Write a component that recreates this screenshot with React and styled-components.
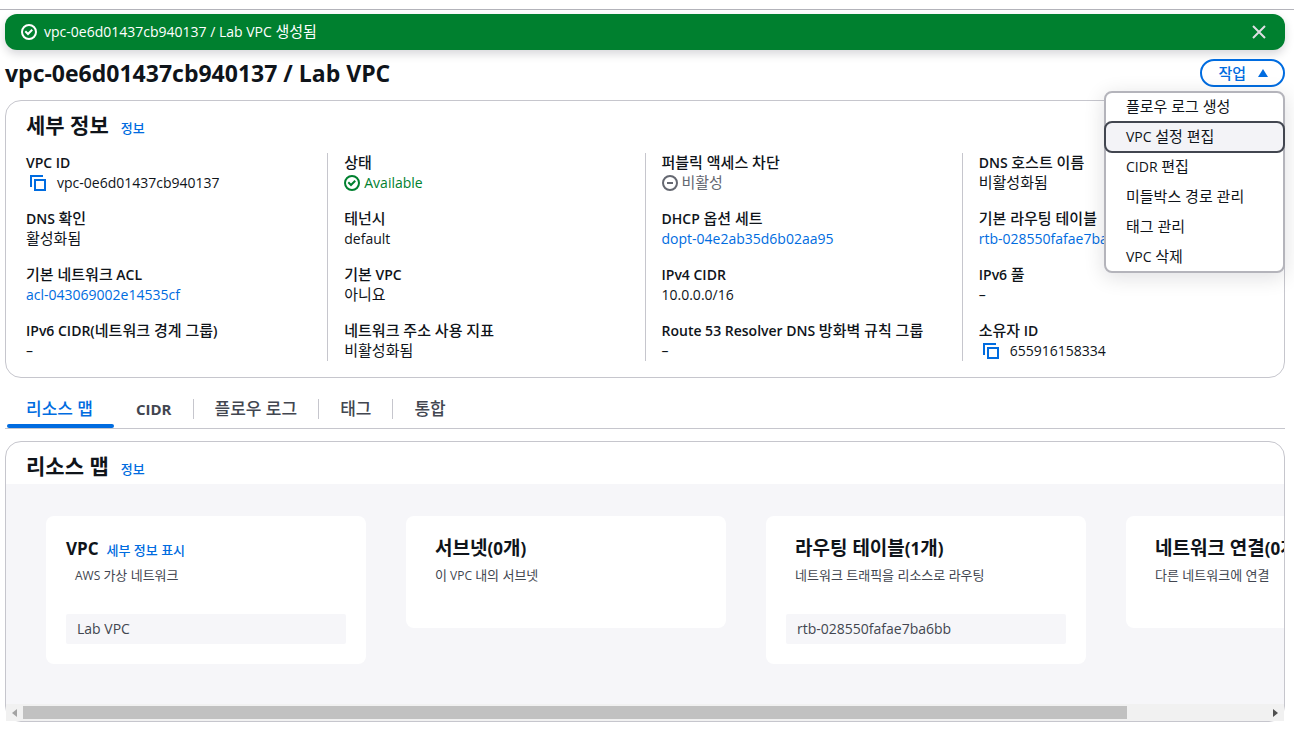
import React, { useState } from 'react'
import styled, { createGlobalStyle, css } from 'styled-components'

const GlobalStyle = createGlobalStyle`
* {
  box-sizing: border-box;
  margin: 0;
  padding: 0;
}
body {
  background: #ffffff;
  color: #0f141a;
  font-family: 'Open Sans', 'Noto Sans CJK KR', sans-serif;
  font-size: 14px;
  line-height: 20px;
}
ul {
  list-style: none;
}
button {
  font-family: inherit;
  background: none;
  border: none;
  cursor: pointer;
}
`

const Page = styled.div`
  margin-top: 9px;
  padding: 4px 9px 14px 5px;
  border-top: 1px solid #b4b4bb;
`
const Hangul = styled.span`
  font-size: ${props => props.$size}px;
  line-height: 1;
`
const Flash = styled.div`
  display: flex;
  align-items: center;
  height: 36px;
  padding: 0 18px 0 16px;
  gap: 7px;
  border-radius: 12px;
  background: #00802f;
  color: #ffffff;
  box-shadow: 0 4px 10px rgba(0, 7, 22, 0.16);
`
const FlashText = styled.p`
  flex: 1;
`
const Close = styled.button`
  display: flex;
  color: #dedee3;
`
const Header = styled.header`
  display: flex;
  justify-content: space-between;
  align-items: center;
  height: 50px;
  padding-bottom: 4px;
`
const Title = styled.h1`
  font-size: 23px;
  font-weight: 700;
  line-height: 28px;
`
const Actions = styled.div`
  position: relative;
`
const ActionButton = styled.button`
  display: flex;
  align-items: center;
  gap: 11px;
  height: 28px;
  padding: 0 14px 0 16px;
  border: 2px solid #006ce0;
  border-radius: 20px;
  color: #006ce0;
  font-size: 14px;
  font-weight: 600;
  ${Hangul} {
    font-weight: 500;
  }
`
const Menu = styled.ul`
  position: absolute;
  z-index: 2;
  top: 32px;
  right: 0;
  width: 181px;
  border: 2px solid #b4b4bb;
  border-radius: 8px;
  background: #ffffff;
  box-shadow: 0 4px 20px 1px rgba(0, 7, 22, 0.12);
`
const MenuItem = styled.li`
  margin: -2px -2px 0;
  &:last-child {
    margin-bottom: -2px;
  }
`
const MenuButton = styled.button`
  position: relative;
  display: block;
  width: 100%;
  height: 32px;
  padding: 0 20px;
  border: 2px solid transparent;
  border-radius: 8px;
  color: #0f141a;
  font-size: 14px;
  line-height: 20px;
  text-align: left;
  ${props => props.$active && css`
    z-index: 1;
    border-color: #424650;
    background: #f3f3f7;
  `}
`
const Panel = styled.section`
  border: 1px solid #c6c6cd;
  border-radius: 16px;
`
const PanelHeader = styled.div`
  display: flex;
  align-items: baseline;
  gap: 12px;
  padding: 13px 20px 4px;
`
const PanelTitle = styled.h2`
  font-size: 20px;
  font-weight: 700;
  line-height: 24px;
`
const InfoLink = styled.a`
  color: #006ce0;
  font-size: 12px;
  font-weight: 600;
  text-decoration: none;
  ${Hangul} {
    font-weight: 500;
  }
`
const Columns = styled.div`
  display: grid;
  grid-template-columns: repeat(4, 1fr);
  padding: 10px 5px 16px 4px;
`
const Column = styled.dl`
  display: flex;
  flex-direction: column;
  gap: 16px;
  min-width: 0;
  padding: 0 16px;
  white-space: nowrap;
  & + & {
    border-left: 1px solid #c6c6cd;
  }
`
const Label = styled.dt`
  height: 20px;
  font-weight: 600;
  ${Hangul} {
    font-weight: 500;
  }
`
const Value = styled.dd`
  display: flex;
  align-items: center;
  height: 20px;
`
const Link = styled.a`
  color: #006ce0;
  text-decoration: none;
`
const Status = styled.span`
  display: flex;
  align-items: center;
  gap: 4px;
  color: ${props => props.$color};
`
const CopyButton = styled.button`
  display: flex;
  margin: 0 11px 0 4px;
  color: #006ce0;
`
const Tabs = styled.div`
  display: flex;
  height: 41px;
  margin: 10px 0 12px;
  border-bottom: 1px solid #c6c6cd;
`
const Tab = styled.button`
  position: relative;
  display: flex;
  align-items: center;
  height: 41px;
  padding: 0 21px;
  color: ${props => (props.$active ? '#006ce0' : '#424650')};
  font-size: 15px;
  font-weight: 700;
  ${Hangul} {
    font-weight: 500;
  }
  & + & {
    padding-left: 22px;
  }
  & + &::before {
    content: '';
    position: absolute;
    left: 0;
    top: 11px;
    width: 1px;
    height: 20px;
    background: #c6c6cd;
  }
  ${props => props.$active && css`
    &::after {
      content: '';
      position: absolute;
      left: 2px;
      right: 0;
      bottom: 1px;
      height: 4px;
      border-radius: 2px;
      background: #006ce0;
    }
  `}
`
const Map = styled.div`
  display: flex;
  align-items: flex-start;
  gap: 40px;
  height: 220px;
  padding: 32px 0 0 40px;
  overflow: hidden;
  background: #f6f6f9;
`
const Card = styled.article`
  flex: 0 0 320px;
  min-height: 112px;
  padding: 20px;
  border-radius: 8px;
  background: #ffffff;
  white-space: nowrap;
`
const CardHeader = styled.div`
  display: flex;
  align-items: baseline;
  gap: 8px;
  padding-left: ${props => (props.$indent ? 9 : 0)}px;
`
const CardTitle = styled.h3`
  font-size: 17px;
  font-weight: 700;
  line-height: 26px;
`
const CardText = styled.p`
  padding-left: 9px;
  color: #424650;
  font-size: 12px;
  line-height: 28px;
`
const Resource = styled.div`
  height: 30px;
  margin-top: 24px;
  padding: 0 11px;
  border-radius: 2px;
  background: #f6f6f9;
  color: #424650;
  line-height: 30px;
`
const Scrollbar = styled.div`
  display: flex;
  align-items: center;
  height: 17px;
  background: #f1f1f1;
`
const Arrow = styled.button`
  display: flex;
  justify-content: center;
  flex: 0 0 17px;
  color: ${props => (props.$muted ? '#a3a3a3' : '#505050')};
`
const Track = styled.div`
  flex: 1;
`
const Thumb = styled.div`
  height: 13px;
  background: #c1c1c1;
`

// splits a mixed string and wraps only its hangul parts
const mix = (text, size = 15) =>
  text
    .split(/([\uAC00-\uD7A3]+(?: [\uAC00-\uD7A3]+)*)/)
    .filter(Boolean)
    .map((part, i) =>
      /[\uAC00-\uD7A3]/.test(part) ? <Hangul key={i} $size={size}>{part}</Hangul> : part
    )

const CheckIcon = () => (
  <svg width="16" height="16" viewBox="0 0 16 16" fill="none" stroke="currentColor" strokeWidth="2">
    <circle cx="8" cy="8" r="7" />
    <path d="m5 8 2 2 3.521-3.521" strokeLinecap="square" />
  </svg>
)

const MinusIcon = () => (
  <svg width="16" height="16" viewBox="0 0 16 16" fill="none" stroke="currentColor" strokeWidth="2">
    <circle cx="8" cy="8" r="7" />
    <path d="M11 8H5" />
  </svg>
)

const CopyIcon = () => (
  <svg width="16" height="16" viewBox="0 0 16 16" fill="none" stroke="currentColor" strokeWidth="2">
    <path d="M15 5H5v10h10V5Z" />
    <path d="M13 1H1v11" />
  </svg>
)

const CloseIcon = () => (
  <svg width="16" height="16" viewBox="0 0 16 16" fill="none" stroke="currentColor" strokeWidth="2">
    <path d="m2 2 12 12M14 2 2 14" />
  </svg>
)

const menu = ['플로우 로그 생성', 'VPC 설정 편집', 'CIDR 편집', '미들박스 경로 관리', '태그 관리', 'VPC 삭제']

const tabs = ['리소스 맵', 'CIDR', '플로우 로그', '태그', '통합']

const columns = [
  [
    { label: 'VPC ID', value: 'vpc-0e6d01437cb940137', type: 'copy' },
    { label: 'DNS 확인', value: '활성화됨' },
    { label: '기본 네트워크 ACL', value: 'acl-043069002e14535cf', type: 'link' },
    { label: 'IPv6 CIDR(네트워크 경계 그룹)', value: '–' }
  ],
  [
    { label: '상태', value: 'Available', type: 'ok' },
    { label: '테넌시', value: 'default' },
    { label: '기본 VPC', value: '아니요' },
    { label: '네트워크 주소 사용 지표', value: '비활성화됨' }
  ],
  [
    { label: '퍼블릭 액세스 차단', value: '비활성', type: 'off' },
    { label: 'DHCP 옵션 세트', value: 'dopt-04e2ab35d6b02aa95', type: 'link' },
    { label: 'IPv4 CIDR', value: '10.0.0.0/16' },
    { label: 'Route 53 Resolver DNS 방화벽 규칙 그룹', value: '–' }
  ],
  [
    { label: 'DNS 호스트 이름', value: '비활성화됨' },
    { label: '기본 라우팅 테이블', value: 'rtb-028550fafae7ba6bb', type: 'link' },
    { label: 'IPv6 풀', value: '–' },
    { label: '소유자 ID', value: '655916158334', type: 'copy' }
  ]
]

const cards = [
  { title: 'VPC', link: '세부 정보 표시', text: 'AWS 가상 네트워크', resource: 'Lab VPC' },
  { title: '서브넷(0개)', text: '이 VPC 내의 서브넷' },
  { title: '라우팅 테이블(1개)', text: '네트워크 트래픽을 리소스로 라우팅', resource: 'rtb-028550fafae7ba6bb' },
  { title: '네트워크 연결(0개)', text: '다른 네트워크에 연결' }
]

const Field = ({ label, value, type }) => (
  <div>
    <Label>{mix(label)}</Label>
    <Value>
      {type === 'copy' && <CopyButton aria-label={label}><CopyIcon /></CopyButton>}
      {type === 'link' && <Link href="#">{value}</Link>}
      {type === 'ok' && <Status $color="#00802f"><CheckIcon />{value}</Status>}
      {type === 'off' && <Status $color="#656871"><MinusIcon /><span>{mix(value)}</span></Status>}
      {(!type || type === 'copy') && <span>{mix(value)}</span>}
    </Value>
  </div>
)

export default function App() {
  const [open, setOpen] = useState(true)
  const [flash, setFlash] = useState(true)
  const [tab, setTab] = useState(0)

  return (
    <>
      <GlobalStyle />
      <Page>
        {flash && (
          <Flash>
            <CheckIcon />
            <FlashText>{mix('vpc-0e6d01437cb940137 / Lab VPC 생성됨')}</FlashText>
            <Close aria-label="닫기" onClick={() => setFlash(false)}><CloseIcon /></Close>
          </Flash>
        )}
        <Header>
          <Title>vpc-0e6d01437cb940137 / Lab VPC</Title>
          <Actions>
            <ActionButton onClick={() => setOpen(!open)}>
              <span>{mix('작업')}</span>
              <svg width="12" height="8" viewBox="0 0 12 8" fill="currentColor">
                <path d="M6 0 11 8H1Z" />
              </svg>
            </ActionButton>
            {open && (
              <Menu>
                {menu.map((item, i) => (
                  <MenuItem key={item}>
                    <MenuButton $active={i === 1}>{mix(item)}</MenuButton>
                  </MenuItem>
                ))}
              </Menu>
            )}
          </Actions>
        </Header>
        <Panel>
          <PanelHeader>
            <PanelTitle>{mix('세부 정보', 21)}</PanelTitle>
            <InfoLink href="#">{mix('정보', 13)}</InfoLink>
          </PanelHeader>
          <Columns>
            {columns.map((fields, i) => (
              <Column key={i}>
                {fields.map(field => <Field key={field.label} {...field} />)}
              </Column>
            ))}
          </Columns>
        </Panel>
        <Tabs>
          {tabs.map((name, i) => (
            <Tab key={name} $active={i === tab} onClick={() => setTab(i)}>
              <span>{mix(name, 17)}</span>
            </Tab>
          ))}
        </Tabs>
        <Panel>
          <PanelHeader>
            <PanelTitle>{mix('리소스 맵', 21)}</PanelTitle>
            <InfoLink href="#">{mix('정보', 13)}</InfoLink>
          </PanelHeader>
          <Map>
            {cards.map(card => (
              <Card key={card.title}>
                <CardHeader $indent={!card.link}>
                  <CardTitle>{mix(card.title, 19)}</CardTitle>
                  {card.link && <InfoLink href="#">{mix(card.link, 13)}</InfoLink>}
                </CardHeader>
                <CardText>{mix(card.text, 13)}</CardText>
                {card.resource && <Resource>{card.resource}</Resource>}
              </Card>
            ))}
          </Map>
          <Scrollbar>
            <Arrow $muted aria-label="왼쪽">
              <svg width="5" height="8" viewBox="0 0 5 8" fill="currentColor"><path d="M5 0v8L0 4Z" /></svg>
            </Arrow>
            <Track>
              <Thumb style={{ width: `${(1278 / 1440) * 100}%` }} />
            </Track>
            <Arrow aria-label="오른쪽">
              <svg width="5" height="8" viewBox="0 0 5 8" fill="currentColor"><path d="M0 0v8l5-4Z" /></svg>
            </Arrow>
          </Scrollbar>
        </Panel>
      </Page>
    </>
  )
}
